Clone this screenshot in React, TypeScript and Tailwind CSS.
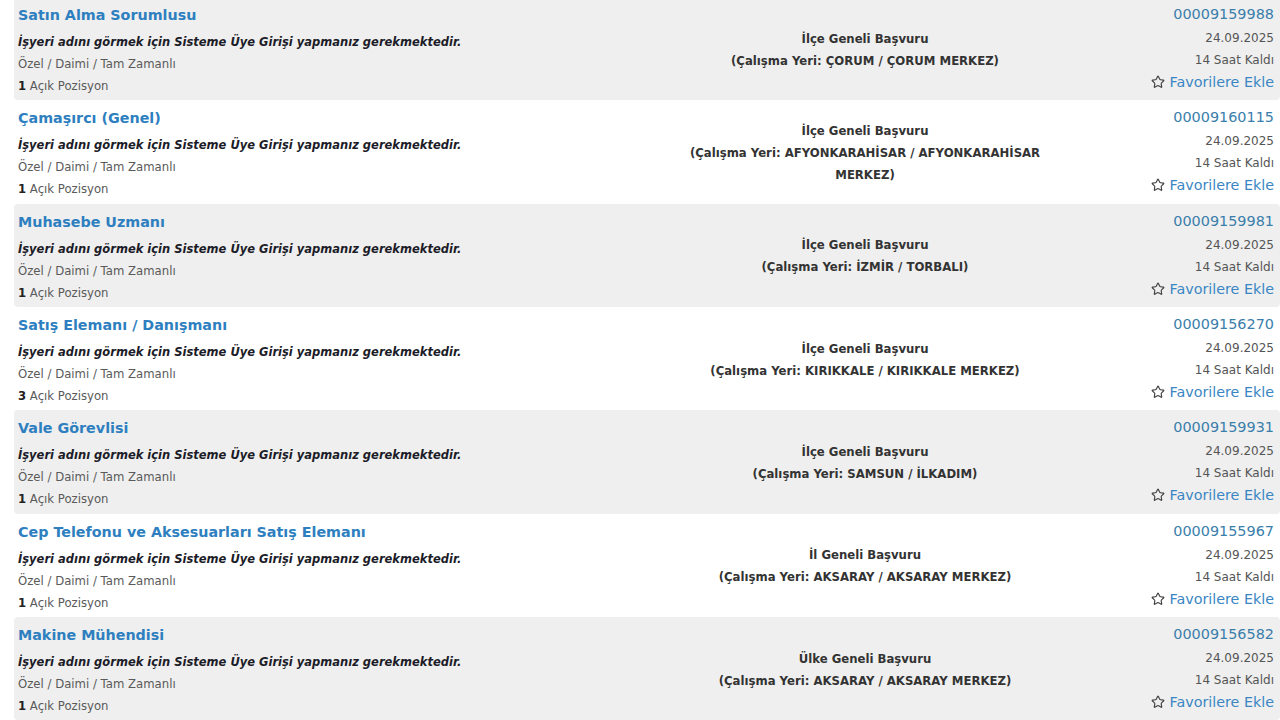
import React from 'react';
import { Star } from 'lucide-react';

interface Job {
  title: string;
  scope: string;
  place: string;
  id: string;
  positions: number;
}

const JOBS: Job[] = [
  { title: 'Satın Alma Sorumlusu', scope: 'İlçe Geneli Başvuru', place: '(Çalışma Yeri: ÇORUM / ÇORUM MERKEZ)', id: '00009159988', positions: 1 },
  { title: 'Çamaşırcı (Genel)', scope: 'İlçe Geneli Başvuru', place: '(Çalışma Yeri: AFYONKARAHİSAR / AFYONKARAHİSAR MERKEZ)', id: '00009160115', positions: 1 },
  { title: 'Muhasebe Uzmanı', scope: 'İlçe Geneli Başvuru', place: '(Çalışma Yeri: İZMİR / TORBALI)', id: '00009159981', positions: 1 },
  { title: 'Satış Elemanı / Danışmanı', scope: 'İlçe Geneli Başvuru', place: '(Çalışma Yeri: KIRIKKALE / KIRIKKALE MERKEZ)', id: '00009156270', positions: 3 },
  { title: 'Vale Görevlisi', scope: 'İlçe Geneli Başvuru', place: '(Çalışma Yeri: SAMSUN / İLKADIM)', id: '00009159931', positions: 1 },
  { title: 'Cep Telefonu ve Aksesuarları Satış Elemanı', scope: 'İl Geneli Başvuru', place: '(Çalışma Yeri: AKSARAY / AKSARAY MERKEZ)', id: '00009155967', positions: 1 },
  { title: 'Makine Mühendisi', scope: 'Ülke Geneli Başvuru', place: '(Çalışma Yeri: AKSARAY / AKSARAY MERKEZ)', id: '00009156582', positions: 1 },
];

const JobRow: React.FC<{ job: Job; shaded: boolean }> = ({ job, shaded }) => (
  <div
    className={
      'grid grid-cols-[662px_370px_1fr] h-[103.33px] rounded-[4px] pl-[4px] pr-[6px] ' +
      (shaded ? 'bg-[#efefef]' : 'bg-white')
    }
  >
    {/* Left: title + info */}
    <div className="pt-[6px]">
      <div className="text-[14.3px] leading-[24px] font-bold text-[#2e7fc0]">{job.title}</div>
      <div className="mt-[4px] text-[11.5px] leading-[22px] font-bold italic text-[#1c1c28]">
        İşyeri adını görmek için Sisteme Üye Girişi yapmanız gerekmektedir.
      </div>
      <div className="text-[11.7px] leading-[22px] text-[#5a5a5a]">Özel / Daimi / Tam Zamanlı</div>
      <div className="text-[11.7px] leading-[22px] text-[#5a5a5a]">
        <span className="font-bold text-[#222]">{job.positions}</span> Açık Pozisyon
      </div>
    </div>

    {/* Center: scope + workplace */}
    <div className="pt-[2px] flex flex-col justify-center text-center text-[11.7px] leading-[22px] font-bold text-[#333]">
      <div>{job.scope}</div>
      <div>{job.place}</div>
    </div>

    {/* Right: id, date, favourite */}
    <div className="pt-[5px] flex flex-col items-end">
      <div className="text-[14.4px] leading-[24px] text-[#3a7eab]">{job.id}</div>
      <div className="mt-[1px] text-[12px] leading-[22px] text-[#555]">24.09.2025</div>
      <div className="text-[12px] leading-[22px] text-[#555]">14 Saat Kaldı</div>
      <div className="flex items-center gap-[5px] text-[14.3px] leading-[22px] text-[#3a86c4]">
        <Star className="w-[14px] h-[14px] text-[#444]" strokeWidth={2} />
        <span>Favorilere Ekle</span>
      </div>
    </div>
  </div>
);

export default function App() {
  return (
    <div
      className="w-[1280px] h-[720px] overflow-hidden bg-white pl-[14px]"
      style={{ fontFamily: '"DejaVu Sans", Verdana, sans-serif' }}
    >
      <div className="-mt-[3px]">
        {JOBS.map((job, i) => (
          <JobRow key={job.id} job={job} shaded={i % 2 === 0} />
        ))}
      </div>
    </div>
  );
}
